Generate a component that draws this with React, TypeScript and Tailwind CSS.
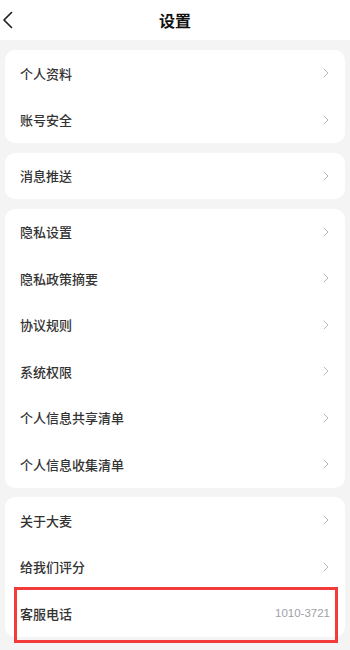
import React from "react";

type Item = { label: string; value?: string; highlight?: boolean };

const groups: Item[][] = [
  [{ label: "个人资料" }, { label: "账号安全" }],
  [{ label: "消息推送" }],
  [
    { label: "隐私设置" },
    { label: "隐私政策摘要" },
    { label: "协议规则" },
    { label: "系统权限" },
    { label: "个人信息共享清单" },
    { label: "个人信息收集清单" },
  ],
  [
    { label: "关于大麦" },
    { label: "给我们评分" },
    { label: "客服电话", value: "1010-3721", highlight: true },
  ],
];

const font = { fontFamily: '"Noto Sans CJK SC", "Noto Sans", sans-serif' };

const Chevron = () => (
  <svg width="6" height="10" viewBox="0 0 6 10" fill="none">
    <polyline points="1,1 5,5 1,9" stroke="#b8b8b8" strokeWidth="1" strokeLinecap="round" strokeLinejoin="round" />
  </svg>
);

const Row = ({ item }: { item: Item }) => (
  <div className={`relative flex h-[46.5px] items-center justify-between pl-[15px] ${item.value ? "pr-[15px]" : "pr-[16px]"}`}>
    <span className="text-[13px] font-medium text-[#333333]">{item.label}</span>
    {item.value ? (
      <span className="text-[11.5px] text-[#a0a0a6]" style={{ fontFamily: '"Liberation Sans", sans-serif' }}>
        {item.value}
      </span>
    ) : (
      <Chevron />
    )}
    {item.highlight && (
      <div className="pointer-events-none absolute left-[9px] right-[7px] top-[-3px] bottom-[-6.5px] border-[3px] border-[#f23b3b]" />
    )}
  </div>
);

export default function App() {
  return (
    <div className="flex h-[650px] w-[350px] flex-col overflow-hidden bg-[#f4f4f4]" style={font}>
      <div className="relative flex h-[40px] shrink-0 items-center justify-center bg-white">
        <svg className="absolute left-[2px] top-[11px]" width="12" height="18" viewBox="0 0 12 18" fill="none">
          <polyline points="9.5,1.5 2,9 9.5,16.5" stroke="#1a1a1a" strokeWidth="1.6" strokeLinecap="round" strokeLinejoin="round" />
        </svg>
        <span className="text-[16px] font-bold text-[#111111]">设置</span>
      </div>
      <div className="flex flex-col gap-[9.5px] px-[5px] pt-[10px]">
        {groups.map((g, i) => (
          <div key={i} className="rounded-[10px] bg-white">
            {g.map((item) => (
              <Row key={item.label} item={item} />
            ))}
          </div>
        ))}
      </div>
    </div>
  );
}
